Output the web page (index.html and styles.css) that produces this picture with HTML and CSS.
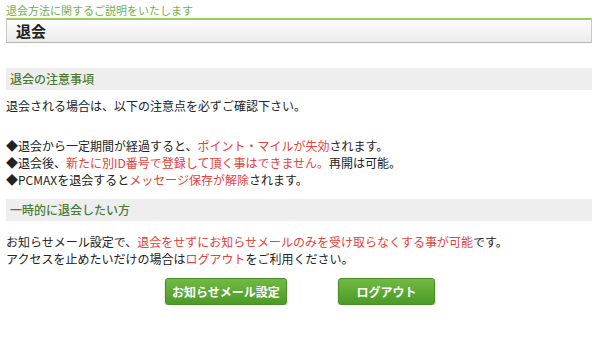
FILE: index.html
```html
<!DOCTYPE html>
<html lang="ja">
  <head>
    <meta charset="UTF-8" />
    <meta name="viewport" content="width=device-width, initial-scale=1.0" />
    <title>退会</title>
    <link rel="stylesheet" href="styles.css">
  </head>
  <body>
    <div class="page">
      <p class="page-lead">退会方法に関するご説明をいたします</p>
      <h1 class="page-title">退会</h1>

      <h2 class="section-head">退会の注意事項</h2>
      <p class="text">退会される場合は、以下の注意点を必ずご確認下さい。</p>
      <ul class="notes">
        <li>◆退会から一定期間が経過すると、<span class="em">ポイント・マイルが失効</span>されます。</li>
        <li>◆退会後、<span class="em">新たに別ID番号で登録して頂く事はできません。</span>再開は可能。</li>
        <li>◆PCMAXを退会すると<span class="em">メッセージ保存が解除</span>されます。</li>
      </ul>

      <h2 class="section-head">一時的に退会したい方</h2>
      <p class="text lines">
        お知らせメール設定で、<span class="em">退会をせずにお知らせメールのみを受け取らなくする事が可能</span>です。<br>
        アクセスを止めたいだけの場合は<span class="em">ログアウト</span>をご利用ください。
      </p>
      <div class="actions">
        <button class="btn btn-mail">お知らせメール設定</button>
        <button class="btn btn-logout">ログアウト</button>
      </div>
    </div>
  </body>
</html>
```

FILE: styles.css
```css
* {
  margin: 0;
  padding: 0;
  box-sizing: border-box;
}
body {
  font-family: "Noto Sans CJK JP", "Noto Sans", sans-serif;
  background: #fff;
  color: #222;
  font-size: 12px;
}
.page {
  width: 586px;
  margin-left: 6px;
  padding-top: 3px;
}
.page-lead {
  font-size: 11px;
  line-height: 14px;
  color: #74b04f;
}
.page-title {
  margin-top: 1px;
  height: 25px;
  border-top: 2px solid #9ccd5a;
  border-left: 1px solid #c8c8c8;
  border-right: 1px solid #c8c8c8;
  border-bottom: 1px solid #b4b4b4;
  background: linear-gradient(#fdfdfd, #ececec);
  padding-left: 9px;
  font-size: 15px;
  font-weight: 700;
  line-height: 21px;
  color: #222;
}
.section-head {
  margin-top: 25px;
  height: 22px;
  background: #eeeeee;
  padding-left: 4px;
  font-size: 12px;
  font-weight: 500;
  line-height: 22px;
  color: #4c7a34;
}
.page-title + .section-head {
  margin-top: 25px;
}
.text {
  margin-top: 7px;
  line-height: 17px;
}
.notes {
  list-style: none;
  margin-top: 23px;
  line-height: 17px;
}
.notes + .section-head {
  margin-top: 11px;
}
.lines {
  margin-top: 12px;
}
.em {
  color: #e8413c;
}
.actions {
  display: flex;
  gap: 51px;
  margin-top: 11px;
  padding-left: 159px;
}
.btn {
  height: 27px;
  border: 1px solid #4a8f26;
  border-radius: 3px;
  background: linear-gradient(#72b944, #4b9a27);
  color: #fff;
  font-family: inherit;
  font-size: 12px;
  font-weight: 700;
  box-shadow: 0 1px 2px rgba(0, 0, 0, 0.25);
}
.btn-mail {
  width: 122px;
}
.btn-logout {
  width: 97px;
}
```
